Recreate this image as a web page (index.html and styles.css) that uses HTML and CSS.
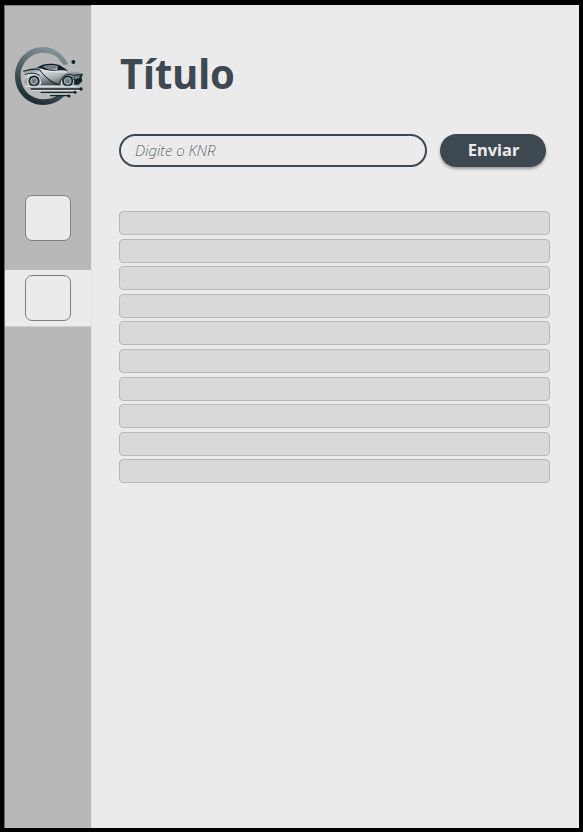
FILE: index.html
```html
<!DOCTYPE html>
<html lang="pt">
<head>
<meta charset="utf-8">
<title>Título</title>
<link rel="stylesheet" href="styles.css">
</head>
<body>
<div class="app">
  <nav class="sidebar">
    <svg class="logo" viewBox="0 0 252 210" aria-hidden="true">
      <defs>
        <linearGradient id="ring" x1="0.7" y1="0" x2="0.3" y2="1">
          <stop offset="0" stop-color="#89969b"/>
          <stop offset="0.4" stop-color="#5b696f"/>
          <stop offset="1" stop-color="#17262e"/>
        </linearGradient>
        <linearGradient id="paint" x1="0" y1="0" x2="0.5" y2="1">
          <stop offset="0" stop-color="#17252c"/>
          <stop offset="0.45" stop-color="#d4d9db"/>
          <stop offset="1" stop-color="#3c484d"/>
        </linearGradient>
        <linearGradient id="side" x1="0" y1="0" x2="1" y2="1">
          <stop offset="0" stop-color="#f5f6f6"/>
          <stop offset="0.5" stop-color="#a9b0b3"/>
          <stop offset="1" stop-color="#25333a"/>
        </linearGradient>
      </defs>
      <path fill="url(#ring)" d="M181 73C165 40 135 21 106 21C58 21 21 60 21 108C21 157 59 195 106 195C132 195 153 184 168 168L151 164C139 173 124 178 108 178C68 178 38 148 38 108C38 69 68 38 106 38C131 38 153 50 166 76Z"/>
      <path fill="#b8b8b8" d="M44 93L80 82L108 70L160 70L184 88L226 100L224 138L50 138Z"/>
      <path fill="url(#paint)" d="M46 93C60 86 75 85 89 82C103 72 133 69 153 76L182 92C199 94 215 97 226 102L220 112L223 123L213 134H196C197 98 157 100 158 136H98C98 98 57 98 59 133L49 128L51 104Z"/>
      <path fill="url(#side)" d="M91 83C105 98 126 120 151 130C157 99 190 99 203 108L216 105L180 93C151 94 123 94 91 83Z"/>
      <path fill="#0f1d24" d="M86 84C103 70 135 67 158 77L181 92C163 92 158 90 145 92C123 94 104 91 91 83L103 79L120 88L147 91L150 78C133 73 112 75 98 82Z"/>
      <path fill="#718087" d="M104 80C119 75 135 75 148 79L144 88L120 88Z"/>
      <path fill="none" stroke="#101e25" stroke-width="3" d="M46 94C69 87 84 87 95 89C108 107 128 129 153 135M50 104C65 98 82 98 95 106M158 128C162 104 180 98 197 106L223 103"/>
      <path fill="none" stroke="#f1f3f3" stroke-width="3" d="M59 132C57 100 99 98 98 132M160 133C160 101 198 101 198 133M98 86C118 96 148 96 175 96"/>
      <path fill="#13232b" d="M198 116L225 103L220 113L223 122L209 134H199Z"/>
      <path stroke="#e9eded" stroke-width="2" d="M201 116L215 111"/>
      <g fill="#5e6b70" stroke="#11212a" stroke-width="5">
        <circle cx="78" cy="123" r="14"/>
        <circle cx="179" cy="123" r="14"/>
      </g>
      <g fill="#7d898e" stroke="#c8ced0" stroke-width="2">
        <circle cx="78" cy="123" r="10"/>
        <circle cx="179" cy="123" r="10"/>
      </g>
      <path stroke="#4a585f" stroke-width="1.5" d="M71 116L85 130M85 116L71 130M172 116L186 130M186 116L172 130"/>
      <path stroke="#dfe3e4" stroke-width="3" d="M52 139H205M68 151H216"/>
      <path stroke="#13232b" stroke-width="4" d="M68 147H218M98 157H201M126 167H180"/>
      <g fill="#13232b">
        <circle cx="196" cy="66" r="6"/>
        <circle cx="219" cy="147" r="5"/>
        <circle cx="201" cy="157" r="4.5"/>
        <circle cx="183" cy="168" r="4.5"/>
      </g>
    </svg>
    <a class="nav-item" href="#"><span class="nav-icon"></span></a>
    <a class="nav-item active" href="#"><span class="nav-icon"></span></a>
  </nav>
  <main class="content">
    <h1>Título</h1>
    <form class="search">
      <input type="text" placeholder="Digite o KNR" aria-label="KNR">
      <button type="button">Enviar</button>
    </form>
    <div class="rows">
      <div class="row"></div>
      <div class="row"></div>
      <div class="row"></div>
      <div class="row"></div>
      <div class="row"></div>
      <div class="row"></div>
      <div class="row"></div>
      <div class="row"></div>
      <div class="row"></div>
      <div class="row"></div>
    </div>
  </main>
</div>
</body>
</html>
```
FILE: styles.css
```css
* {
  box-sizing: border-box;
}

body {
  margin: 0;
  height: 832px;
  padding: 5px 4px 4px 4px;
  background: #000;
  font-family: "Noto Sans", sans-serif;
}

.app {
  display: flex;
  height: 823px;
  background: #ebebeb;
}

.sidebar {
  width: 87px;
  padding-top: 35px;
  background: #b8b8b8;
  border-top: 1px solid #858585;
  border-left: 1px solid #707070;
}

.logo {
  display: block;
  width: 84px;
  height: 70px;
  margin: -1px 0 79px 3px;
}

.nav-item {
  display: flex;
  justify-content: center;
  align-items: center;
  height: 57px;
  margin-bottom: 24px;
}

.nav-item + .nav-item {
  margin-bottom: 0;
}

.nav-item.active {
  background: #ebebeb;
  border-bottom: 1px solid #cfcfcf;
}

.nav-icon {
  width: 46px;
  height: 46px;
  border: 1px solid #7b8085;
  border-radius: 7px;
  background: #ebebeb;
}

.content {
  flex: 1;
  padding: 39px 29px 0 27px;
  border-left: 1px solid #e2e2e2;
}

h1 {
  width: fit-content;
  margin: 0 0 33px 0.5px;
  color: #3e4850;
  font-size: 42px;
  line-height: 57px;
  transform: scaleX(0.95);
  transform-origin: left;
}

.search {
  display: flex;
  gap: 13px;
  margin-bottom: 44px;
}

.search input {
  width: 308px;
  height: 33px;
  padding: 0 14px 1px;
  border: 2px solid #3e4850;
  border-radius: 17px;
  background: transparent;
  font: italic 200 15px "Noto Sans", sans-serif;
}

.search input::placeholder {
  color: #3e4850;
}

.search button {
  width: 106px;
  height: 33px;
  padding: 0 0 2px 1px;
  border: 0;
  border-radius: 17px;
  background: #3e4850;
  box-shadow: 0 2px 3px rgba(0, 0, 0, 0.35);
  color: #ebebeb;
  font: bold 16.5px "Noto Sans", sans-serif;
}

.rows {
  display: grid;
  gap: 3.6px;
}

.row {
  height: 24px;
  border: 1px solid #b9b9b9;
  border-radius: 4px;
  background: #d9d9d9;
}
```
